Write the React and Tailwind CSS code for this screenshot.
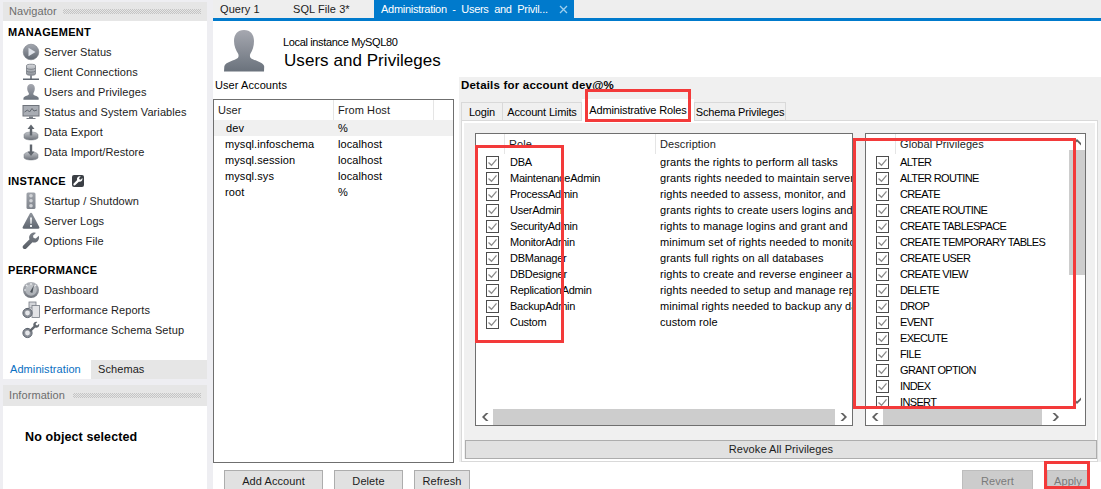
import React from "react";

const FONT = "font-['Liberation_Sans',Arial,sans-serif]";

const Grad = ({ id, a = "#a4a8b0", b = "#5f6670" }) => (
  <linearGradient id={id} x1="0" y1="0" x2="0" y2="1">
    <stop offset="0" stopColor={a} />
    <stop offset="1" stopColor={b} />
  </linearGradient>
);

const Svg = ({ children, size = 18 }) => (
  <svg width={size} height={size} viewBox="0 0 18 18" className="shrink-0">{children}</svg>
);

const Person = ({ size = 18, id = "p" }) => (
  <svg width={size} height={size} viewBox="0 0 42 42" className="shrink-0">
    <defs><Grad id={id} a="#a6a8b0" b="#6a727c" /></defs>
    <path fill={`url(#${id})`} d="M21 0c6.500 0 10 4.500 10 11 0 5-1.500 9.500-3.500 12.500-.8 1.300-.8 3.500.2 4.500 2.500 2.300 13 4 13.500 8.500L41 41.500H1l.3-5c.6-4.500 11-6.200 13.500-8.500 1-1 1-3.200.2-4.500C13 20.500 11 16 11 11 11 4.500 14.500 0 21 0z" />
  </svg>
);

const IconStatus = () => (
  <Svg><defs><Grad id="g1" /></defs><circle cx="9" cy="9" r="7.800" fill="url(#g1)" stroke="#777c84" strokeWidth=".6" /><path d="M6.500 4.800v8.400L13.500 9z" fill="#dfe3ea" /></Svg>
);
const IconClient = () => (
  <Svg>
    <defs><Grad id="g2" a="#d4d6da" b="#8d929a" /></defs>
    <path d="M4.500 2.500C4.500.8 13.500.8 13.500 2.500V11c0 1.700-9 1.700-9 0z" fill="url(#g2)" stroke="#777c84" strokeWidth=".8" />
    <path d="M4.500 5.200c1.500 1.500 7.500 1.500 9 0M4.500 8c1.500 1.500 7.500 1.500 9 0" fill="none" stroke="#6e737b" strokeWidth=".8" />
    <path d="M9 12.500v3M1 16.200h16" stroke="#5f6670" strokeWidth="1.500" />
  </Svg>
);
const IconMonitor = () => (
  <Svg>
    <rect x="1" y="2.500" width="16" height="10.500" fill="#a9adb4" stroke="#6e737b" />
    <path d="M2.500 9l3-2 2 2 2.500-3.500 2 2.500 3-1" fill="none" stroke="#5a6068" strokeWidth=".9" />
    <path d="M7 13.500h4v1.500H7zM4.500 15h9v1h-9z" fill="#777c84" />
  </Svg>
);
const Platter = ({ id }) => (
  <>
    <defs><Grad id={id} a="#c2c5ca" b="#6d727a" /></defs>
    <path d="M2 12c0-1.800 3-3 7-3s7 1.200 7 3v2.500c0 1.300-3 2.500-7 2.500s-7-1.200-7-2.500z" fill={`url(#${id})`} stroke="#777c84" strokeWidth=".5" />
  </>
);
const IconExport = () => (
  <Svg><Platter id="g3" /><path d="M9 1.500L5.500 6H7.800v6.500h2.400V6h2.300z" fill="#60666e" /></Svg>
);
const IconImport = () => (
  <Svg><Platter id="g4" /><path d="M7.800 1.500h2.400v7h2.300L9 13 5.500 8.500h2.300z" fill="#60666e" /></Svg>
);
const IconLight = () => (
  <Svg>
    <defs><Grad id="g5" a="#9fa3aa" b="#7f848c" /></defs>
    <rect x="4.500" y="0.500" width="9" height="16.500" rx="1.500" fill="url(#g5)" />
    <circle cx="9" cy="3.700" r="1.800" fill="#d0d2d6" /><circle cx="9" cy="8.700" r="1.800" fill="#d0d2d6" /><circle cx="9" cy="13.700" r="1.800" fill="#d0d2d6" />
  </Svg>
);
const IconWarn = () => (
  <Svg>
    <defs><Grad id="g6" a="#8f949c" b="#5f6670" /></defs>
    <path d="M9 .8c.6 0 1 .4 1.300 1L17.300 15c.4 1-.1 1.700-1 1.700H1.700c-.9 0-1.400-.7-1-1.700L7.700 1.800C8 1.200 8.400.8 9 .8z" fill="url(#g6)" />
    <path d="M8 5.500h2l-.4 6.300H8.400zM8 13h2v2H8z" fill="#eef0f2" />
  </Svg>
);
const wrenchPath = "M16.800 3.800l-3 2.800-2.200-.6-.6-2.200 2.900-2.900C12 .2 9.700.7 8.400 2.200 7 3.700 6.800 5.800 7.500 7.300L1.300 13.500c-.9.900-.9 2.200 0 3 .8.800 2.100.8 3-.1l6.200-6.200c1.600.7 3.700.4 5.100-1 1.400-1.400 1.800-3.500 1.200-5.400z";
const IconWrench = () => (
  <Svg><defs><Grad id="g7" a="#7b8088" b="#585e66" /></defs><path d={wrenchPath} fill="url(#g7)" /></Svg>
);
const IconGauge = () => (
  <Svg>
    <defs><Grad id="g8" a="#b3b6bc" b="#6f747c" /></defs>
    <circle cx="9" cy="9" r="8" fill="url(#g8)" />
    <circle cx="9" cy="9" r="5.800" fill="#d6d8dc" opacity=".55" />
    <path d="M4 3.800l1.500 1.500M9 2v2M14 3.800l-1.500 1.500M2 9h2" stroke="#eef0f2" strokeWidth="1.200" />
    <path d="M8 11l4-7 -1.600 8z" fill="#4e545c" />
  </Svg>
);
const SmallGauge = () => (
  <>
    <circle cx="5.500" cy="12" r="4.600" fill="#8a8f97" stroke="#5f6670" />
    <circle cx="5.500" cy="12" r="2.400" fill="#e6e7ea" />
    <path d="M4.500 7h2v1.500h-2z" fill="#5f6670" />
  </>
);
const IconReports = () => (
  <Svg>
    <rect x="7" y="1" width="7" height="6" fill="#d4d6da" stroke="#777c84" strokeWidth=".8" />
    <rect x="10" y="4.500" width="7.500" height="12" fill="#e2e3e6" stroke="#777c84" strokeWidth=".8" />
    <SmallGauge />
  </Svg>
);
const IconPerfSetup = () => (
  <Svg>
    <SmallGauge />
    <g transform="translate(7 .5) scale(.6)"><path d={wrenchPath} fill="#62686f" /></g>
  </Svg>
);

const Grip = () => (
  <div className="h-[5px] flex-1 bg-[repeating-conic-gradient(#c4c4c4_0_25%,transparent_0_50%)] bg-[length:2px_2px]" />
);

const NavItem = ({ icon, label }) => (
  <div className="flex h-[20px] items-center gap-[5px] pl-[19px] text-[#1c1c1c]">
    <div className="flex w-[17px] justify-center">{icon}</div>
    <span>{label}</span>
  </div>
);

const Section = ({ children }) => (
  <div className="flex h-[20px] items-center gap-[6px] pl-[5px] text-[11px] font-bold tracking-[0.300px] text-black">{children}</div>
);

const Btn = ({ children, className }) => (
  <div className={`flex items-center justify-center border border-[#adadad] bg-[#e1e1e1] ${className}`}>{children}</div>
);

const Check = () => (
  <svg width="13" height="13" viewBox="0 0 13 13" className="shrink-0">
    <rect x=".5" y=".5" width="12" height="12" fill="#fff" stroke="#4d4d4d" />
    <path d="M2.500 6.500l3 2.800 5-6" fill="none" stroke="#8a8a8a" strokeWidth="1.300" />
  </svg>
);

const Arrow = ({ dir }) => {
  const d = {
    left: "M7 2L3 6l4 4h2.500L5.500 6l4-4z",
    right: "M5 2l4 4-4 4H2.500l4-4-4-4z",
    up: "M2 7l4-4 4 4v2.500l-4-4-4 4z",
    down: "M2 5l4 4 4-4V2.500l-4 4-4-4z",
  }[dir];
  return <svg width="12" height="12" viewBox="0 0 12 12"><path d={d} fill="#606060" /></svg>;
};

const roles = [
  ["DBA", "grants the rights to perform all tasks"],
  ["MaintenanceAdmin", "grants rights needed to maintain server"],
  ["ProcessAdmin", "rights needed to assess, monitor, and"],
  ["UserAdmin", "grants rights to create users logins and"],
  ["SecurityAdmin", "rights to manage logins and grant and"],
  ["MonitorAdmin", "minimum set of rights needed to monito"],
  ["DBManager", "grants full rights on all databases"],
  ["DBDesigner", "rights to create and reverse engineer a"],
  ["ReplicationAdmin", "rights needed to setup and manage repl"],
  ["BackupAdmin", "minimal rights needed to backup any da"],
  ["Custom", "custom role"],
];

const privileges = [
  "ALTER", "ALTER ROUTINE", "CREATE", "CREATE ROUTINE", "CREATE TABLESPACE",
  "CREATE TEMPORARY TABLES", "CREATE USER", "CREATE VIEW", "DELETE", "DROP",
  "EVENT", "EXECUTE", "FILE", "GRANT OPTION", "INDEX", "INSERT",
];

const users = [
  ["mysql.infoschema", "localhost"],
  ["mysql.session", "localhost"],
  ["mysql.sys", "localhost"],
  ["root", "%"],
];

const RedBox = ({ className }) => (
  <div className={`pointer-events-none absolute z-20 border-[3px] border-[#f33a3a] ${className}`} />
);

export default function App() {
  return (
    <div className={`${FONT} relative flex h-[489px] w-[1101px] overflow-hidden whitespace-nowrap bg-[#eeeef2] text-[11px] tracking-[0.080px] text-black`}>
      {/* Sidebar */}
      <aside className="flex w-[213px] shrink-0 flex-col pl-[3px] pr-[6px] pt-[2px]">
        <div className="flex h-[19px] shrink-0 items-center gap-[6px] bg-[#e6e6e6] px-[6px] text-[#6d6d6d]">
          <span>Navigator</span><Grip />
        </div>
        <div className="flex flex-1 flex-col bg-white pt-[1px]">
          <Section>MANAGEMENT</Section>
          <NavItem icon={<IconStatus />} label="Server Status" />
          <NavItem icon={<IconClient />} label="Client Connections" />
          <NavItem icon={<Person size={16} id="pn" />} label="Users and Privileges" />
          <NavItem icon={<IconMonitor />} label="Status and System Variables" />
          <NavItem icon={<IconExport />} label="Data Export" />
          <NavItem icon={<IconImport />} label="Data Import/Restore" />
          <div className="h-[9px]" />
          <Section>
            <span>INSTANCE</span>
            <span className="flex h-[12px] w-[12px] items-center justify-center rounded-[2px] bg-[#3b3f45]">
              <svg width="10" height="10" viewBox="0 0 18 18"><path d={wrenchPath} fill="#fff" /></svg>
            </span>
          </Section>
          <NavItem icon={<IconLight />} label="Startup / Shutdown" />
          <NavItem icon={<IconWarn />} label="Server Logs" />
          <NavItem icon={<IconWrench />} label="Options File" />
          <div className="h-[9px]" />
          <Section>PERFORMANCE</Section>
          <NavItem icon={<IconGauge />} label="Dashboard" />
          <NavItem icon={<IconReports />} label="Performance Reports" />
          <NavItem icon={<IconPerfSetup />} label="Performance Schema Setup" />
        </div>
        <div className="flex h-[19px] shrink-0 bg-white">
          <div className="flex w-[88px] items-center pl-[7px] text-[#0a6fc2]">Administration</div>
          <div className="flex flex-1 items-center bg-[#e6e6e6] pl-[7px] text-[#1c1c1c]">Schemas</div>
        </div>
        <div className="h-[6px] shrink-0" />
        <div className="flex h-[21px] shrink-0 items-center gap-[8px] bg-[#e6e6e6] px-[6px] text-[#6d6d6d]">
          <span>Information</span><Grip />
        </div>
        <div className="h-[83px] shrink-0 bg-white pl-[22px] pt-[22px] text-[12.500px] font-bold tracking-[0.100px]">
          No object selected
        </div>
      </aside>

      {/* Main */}
      <main className="flex min-w-0 flex-1 flex-col">
        <div className="flex h-[18px] shrink-0 bg-[#eeeeee] text-[#1c1c1c]">
          <div className="flex w-[80px] items-center pl-[7px]">Query 1</div>
          <div className="flex w-[81px] items-center">SQL File 3*</div>
          <div className="flex w-[200px] items-center justify-between bg-[#007acc] pl-[7px] pr-[6px] text-white">
            <span className="tracking-[-0.280px]">Administration&nbsp; -&nbsp; Users&nbsp; and&nbsp; Privil...</span>
            <svg width="9" height="9" viewBox="0 0 9 9"><path d="M1 1l7 7M8 1L1 8" stroke="#9fd0ef" strokeWidth="1.300" /></svg>
          </div>
        </div>
        <div className="h-[3px] shrink-0 bg-[#007acc]" />

        <div className="flex min-h-0 flex-1 flex-col bg-white">
          {/* Title */}
          <div className="flex h-[56px] shrink-0 items-start pl-[10px] pt-[9px]">
            <Person size={42} id="pb" />
            <div className="pl-[18px] pt-[5px]">
              <div className="text-[11px] leading-[15px] tracking-[-0.350px]">Local instance MySQL80</div>
              <div className="pl-[1px] text-[17px] leading-[21px] tracking-[0.050px]">Users and Privileges</div>
            </div>
          </div>

          {/* Body */}
          <div className="flex min-h-0 flex-1">
            <div className="flex w-[241px] shrink-0 flex-col">
              <div className="flex h-[22px] shrink-0 items-start pl-[2px] pt-[1px] leading-[14px]">User Accounts</div>
              <div className="flex-1 border border-[#6f6f6f] bg-white">
                <div className="flex h-[20px] text-[#1c1c1c]">
                  <div className="flex w-[120px] items-center border-r border-[#e5e5e5] pl-[4px]">User</div>
                  <div className="flex w-[100px] items-center border-r border-[#e5e5e5] pl-[4px]">From Host</div>
                </div>
                <div className="flex h-[16px] items-center bg-[#f0f0f0]">
                  <div className="w-[120px] pl-[12px]">dev</div>
                  <div className="pl-[4px]">%</div>
                </div>
                {users.map(([u, h]) => (
                  <div key={u} className="flex h-[16px] items-center">
                    <div className="w-[120px] pl-[11px]">{u}</div>
                    <div className="pl-[4px]">{h}</div>
                  </div>
                ))}
              </div>
            </div>

            <div className="ml-[5px] flex h-[385px] min-w-0 flex-1 flex-col self-start bg-[#f0f0f0] pl-[2px] pr-[3px]">
              <div className="flex h-[24px] shrink-0 items-start pt-[1px] text-[11.500px] font-bold leading-[14px] tracking-[0.200px]">Details for account dev@%</div>
              <div className="z-10 -mb-[1px] flex h-[20px] shrink-0 items-end tracking-[-0.150px]">
                <div className="flex h-[19px] w-[42px] items-center justify-center border border-b-0 border-[#d9d9d9]">Login</div>
                <div className="flex h-[19px] w-[79px] items-center justify-center border border-b-0 border-l-0 border-[#d9d9d9]">Account Limits</div>
                <div className="-mt-[3px] flex h-[22px] w-[112px] items-start justify-center bg-white pt-[3px]">Administrative Roles</div>
                <div className="flex h-[19px] w-[92px] items-center justify-center border border-b-0 border-[#d9d9d9]">Schema Privileges</div>
              </div>
              <div className="flex min-h-0 flex-1 flex-col border border-[#d9d9d9] bg-white p-[2px]">
                <div className="flex min-h-0 flex-1 flex-col bg-[#f0f0f0] px-[1px]">
                  <div className="box-content flex h-[293px] shrink-0 pl-[10px] pt-[10px]">
                    {/* Roles */}
                    <div className="flex w-[378px] shrink-0 flex-col border border-[#6f6f6f] bg-white">
                      <div className="flex h-[20px] shrink-0 text-[#1c1c1c]">
                        <div className="w-[29px] border-r border-[#e5e5e5]" />
                        <div className="flex w-[151px] items-center border-r border-[#e5e5e5] pl-[4px]">Role</div>
                        <div className="flex items-center pl-[4px]">Description</div>
                      </div>
                      <div className="min-h-0 flex-1 overflow-hidden">
                        {roles.map(([r, d]) => (
                          <div key={r} className="flex h-[16px] items-center">
                            <div className="w-[10px] shrink-0" />
                            <Check />
                            <div className="w-[161px] shrink-0 pl-[11px] tracking-[-0.250px]">{r}</div>
                            <div className="min-w-0 overflow-hidden">{d}</div>
                          </div>
                        ))}
                      </div>
                      <div className="flex h-[16px] shrink-0 items-center">
                        <div className="flex w-[17px] justify-center"><Arrow dir="left" /></div>
                        <div className="h-full flex-1 bg-[#cdcdcd]" />
                        <div className="flex w-[17px] justify-center"><Arrow dir="right" /></div>
                      </div>
                    </div>
                    <div className="w-[12px] shrink-0" />
                    {/* Privileges */}
                    <div className="flex w-[221px] shrink-0 flex-col border border-[#6f6f6f] bg-white">
                      <div className="flex min-h-0 flex-1">
                        <div className="flex min-w-0 flex-1 flex-col">
                          <div className="flex h-[20px] shrink-0">
                            <div className="w-[30px] border-r border-[#e5e5e5]" />
                            <div className="flex items-center pl-[4px] text-[#1c1c1c]">Global Privileges</div>
                          </div>
                          <div className="min-h-0 flex-1 overflow-hidden">
                            {privileges.map((p) => (
                              <div key={p} className="flex h-[16px] items-center">
                                <div className="w-[10px] shrink-0" />
                                <Check />
                                <div className="pl-[11px] tracking-[-0.650px]">{p}</div>
                              </div>
                            ))}
                          </div>
                        </div>
                        <div className="flex w-[16px] shrink-0 flex-col items-center">
                          <div className="flex h-[16px] shrink-0 items-center"><Arrow dir="up" /></div>
                          <div className="h-[125px] w-full shrink-0 bg-[#cdcdcd]" />
                          <div className="flex-1" />
                          <div className="flex h-[16px] shrink-0 items-center"><Arrow dir="down" /></div>
                        </div>
                      </div>
                      <div className="flex h-[16px] shrink-0 items-center">
                        <div className="flex w-[17px] justify-center"><Arrow dir="left" /></div>
                        <div className="h-full w-[159px] bg-[#cdcdcd]" />
                        <div className="flex w-[28px] justify-center"><Arrow dir="right" /></div>
                      </div>
                    </div>
                  </div>
                  <div className="flex-1" />
                  <Btn className="h-[19px] w-[632px] text-[#1c1c1c]">Revoke All Privileges</Btn>
                </div>
              </div>
            </div>
          </div>

          {/* Footer */}
          <div className="flex h-[26px] shrink-0 items-start overflow-hidden pl-[11px] pr-[12px] pt-[7px] text-[#1c1c1c]">
            <Btn className="h-[22px] w-[99px] shrink-0">Add Account</Btn>
            <Btn className="ml-[11px] h-[22px] w-[69px] shrink-0">Delete</Btn>
            <Btn className="ml-[11px] h-[22px] w-[56px] shrink-0">Refresh</Btn>
            <div className="flex-1" />
            <div className="flex h-[22px] w-[71px] shrink-0 items-center justify-center border border-[#bdbdbd] bg-[#cccccc] text-[#7a7a7a]">Revert</div>
            <div className="ml-[14px] flex h-[22px] w-[42px] shrink-0 items-center justify-center border border-[#bdbdbd] bg-[#cccccc] text-[#7a7a7a]">Apply</div>
          </div>
        </div>
      </main>

      <RedBox className="left-[585px] top-[89px] h-[33px] w-[106px]" />
      <RedBox className="left-[475px] top-[145px] h-[198px] w-[89px]" />
      <RedBox className="left-[853px] top-[138px] h-[271px] w-[223px]" />
      <RedBox className="left-[1044px] top-[461px] h-[28px] w-[46px]" />
    </div>
  );
}
